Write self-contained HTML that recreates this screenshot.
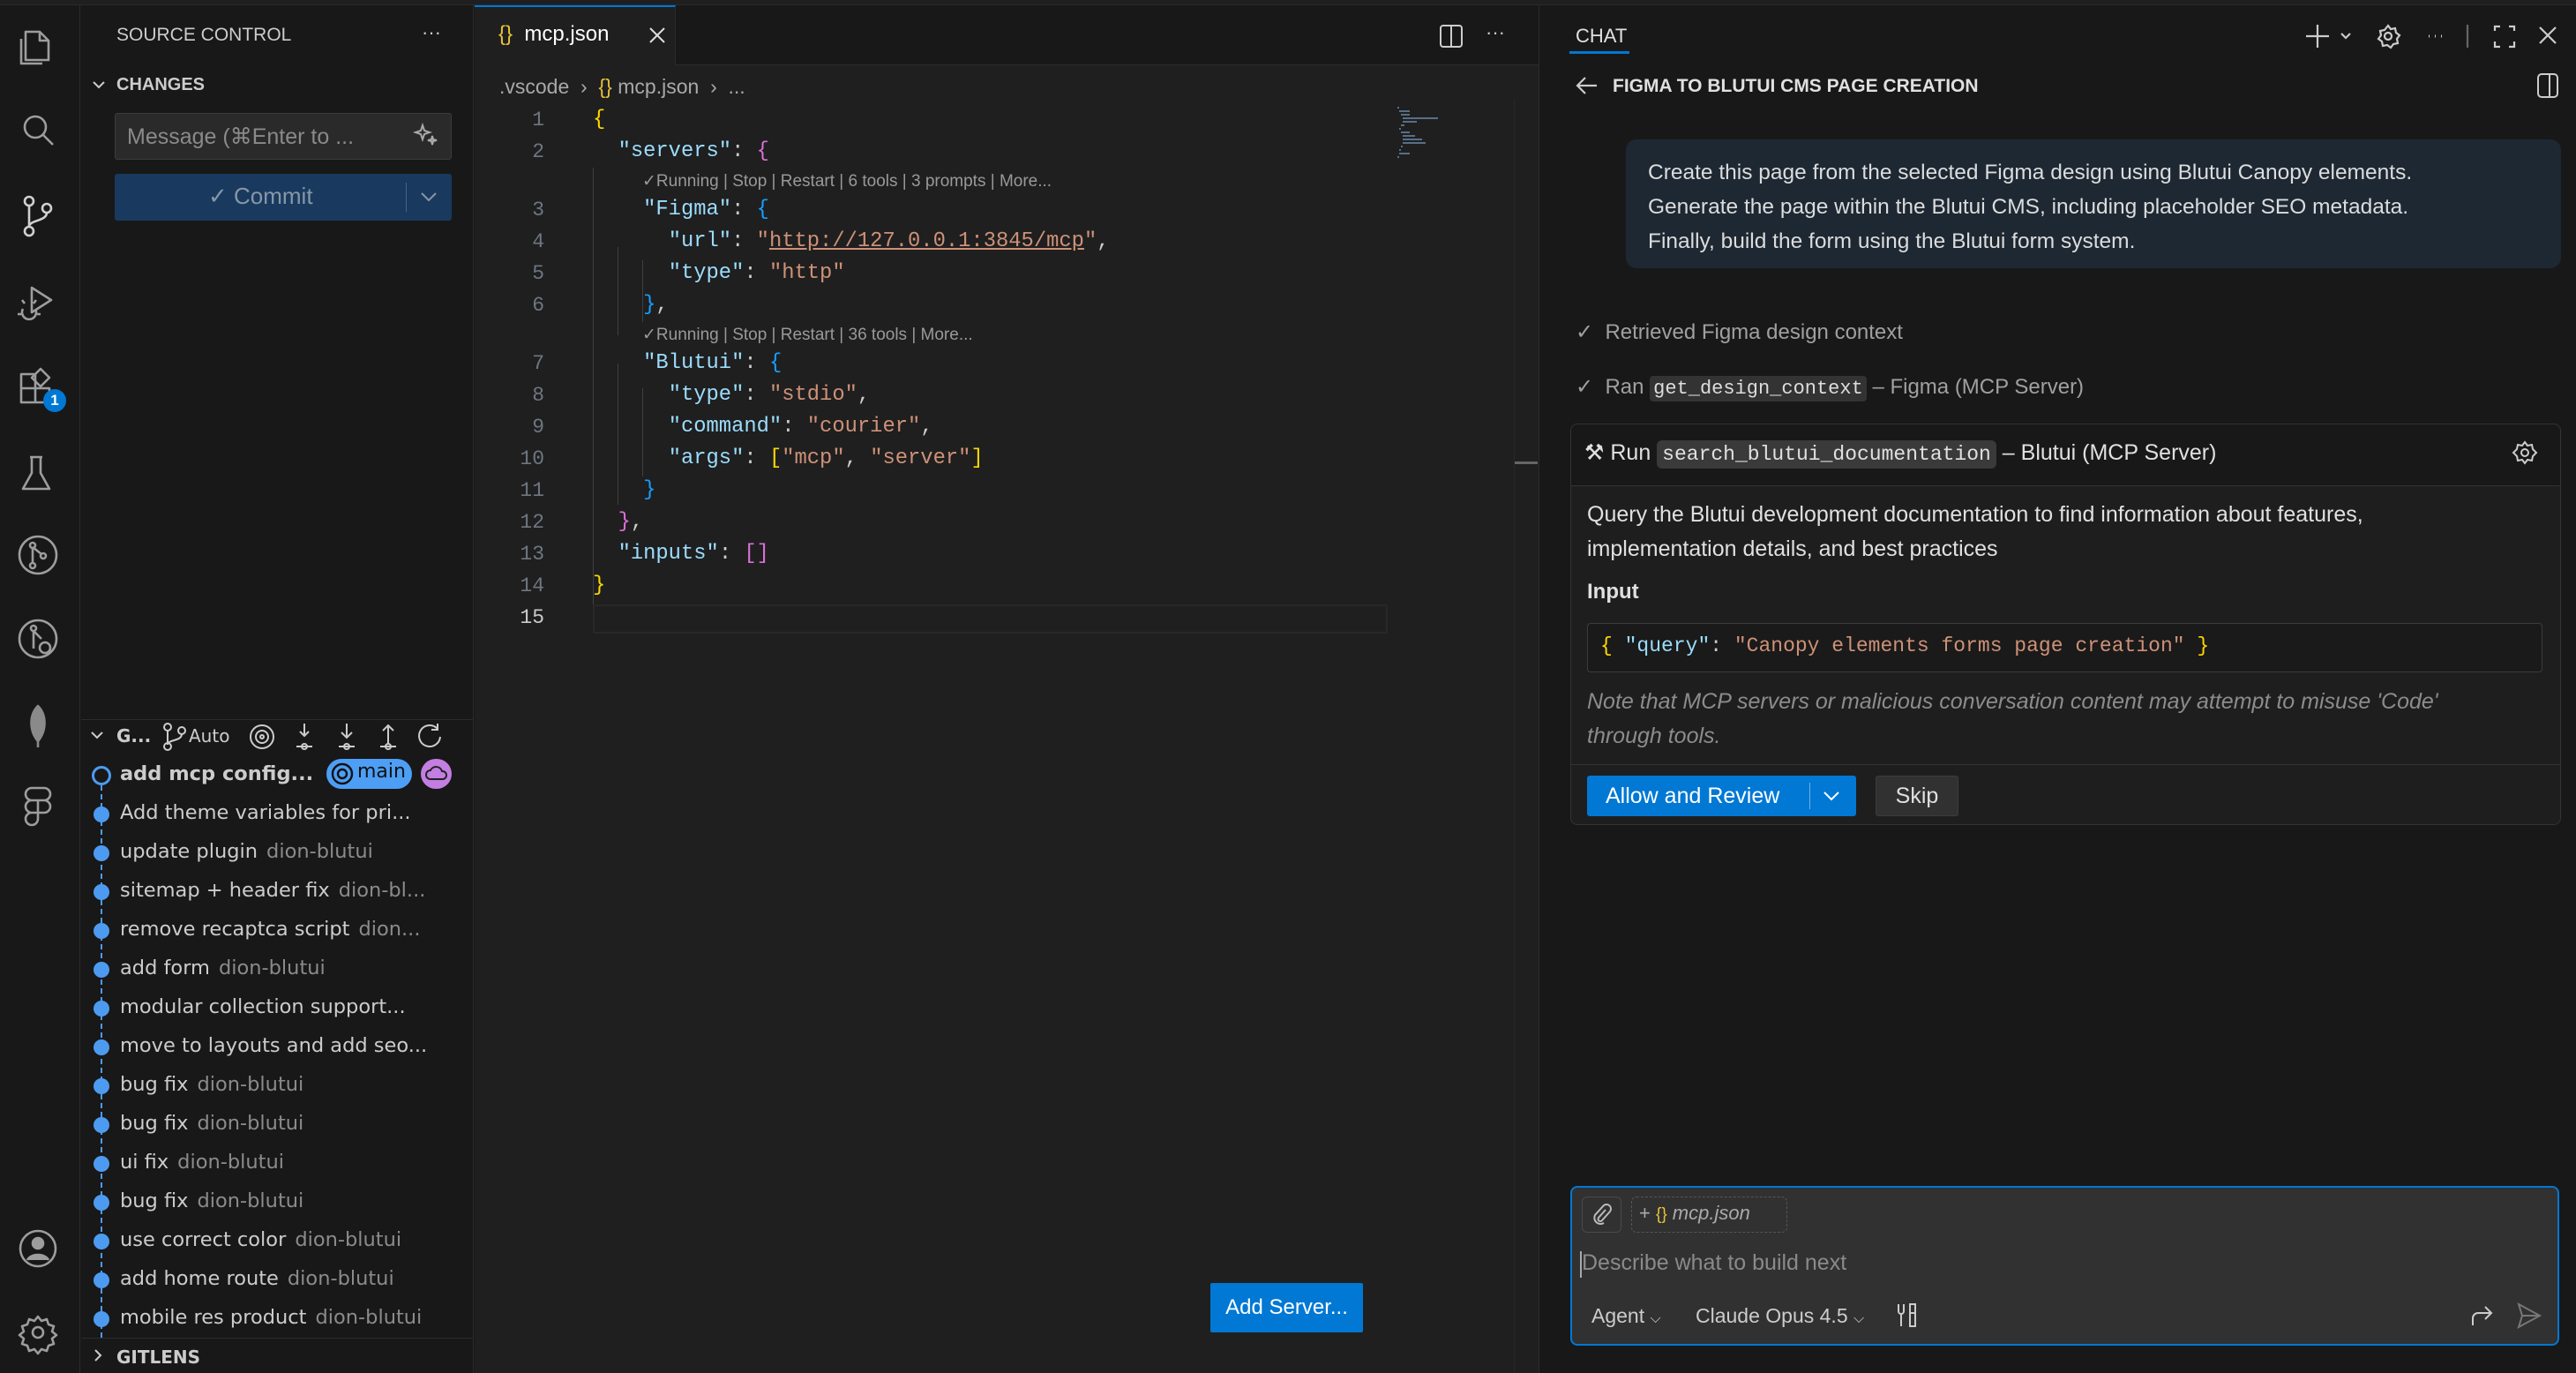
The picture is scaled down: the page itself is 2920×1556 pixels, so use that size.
<!DOCTYPE html>
<html><head><meta charset="utf-8">
<style>
*{margin:0;padding:0;box-sizing:border-box}
body{width:2920px;height:1556px;background:#181818;overflow:hidden;position:relative;font-family:"Liberation Sans",sans-serif;color:#cccccc}
.a{position:absolute;white-space:nowrap}
svg{position:absolute;overflow:visible}
.mono{font-family:"Liberation Mono",monospace}
.k{color:#9cdcfe}.s{color:#ce9178}.y{color:#ffd700}.p{color:#da70d6}.b{color:#179fff}
.ln{position:absolute;left:560px;width:57px;text-align:right;color:#6e7681;font-family:"Liberation Mono",monospace;font-size:23px}
.cl{position:absolute;left:672px;font-family:"Liberation Mono",monospace;font-size:23.8px;color:#cccccc;white-space:pre}
.lens{position:absolute;left:728px;font-size:19px;color:#999}
.cm{position:absolute;left:136px;font-family:"DejaVu Sans",sans-serif;font-size:22.5px;color:#cccccc;white-space:nowrap}
.cm i{font-style:normal;color:#8b8b8b;margin-left:10px}
.dot{position:absolute;left:106px;width:18px;height:18px;border-radius:50%;background:#4d9bf0}
</style></head><body>
<div class="a" style="left:0;top:0;width:2920px;height:6px;background:#1f1f1f;border-bottom:1px solid #2b2b2b"></div>
<div class="a" style="left:0;top:6px;width:91px;height:1550px;background:#181818;border-right:1px solid #2b2b2b"></div>
<svg width="91" height="1556" style="left:0;top:0" fill="none" stroke="#9d9d9d" stroke-width="2.6" stroke-linejoin="round">
 <path d="M29 36h16l10 10v22H29z M45 36v10h10 M24 44v28h24"/>
 <circle cx="40" cy="144" r="12"/><path d="M49 153l11 11"/>
 <g stroke="#d0d0d0"><circle cx="33" cy="228" r="5"/><circle cx="33" cy="262" r="5"/><circle cx="53" cy="236" r="5"/><path d="M33 233v24 M53 241c0 10-20 8-20 16"/></g>
 <path d="M36 326l22 14-22 14z M26 350a8 8 0 1 0 14 0 M24 356h-4 M42 356h4 M28 344l-3-4 M38 344l3-4"/>
 <path d="M24 424h16v16H24z M24 440h16v16H24z M40 440h16v16H40z M46 418l10 10-10 10-10-10z"/>
 <path d="M34 518h14 M36 518v18l-10 18h30l-10-18v-18"/>
 <circle cx="43" cy="629" r="21"/><circle cx="37" cy="618" r="3"/><circle cx="37" cy="641" r="3"/><circle cx="49" cy="630" r="3"/><path d="M37 621v17 M37 620l10 8"/>
 <circle cx="43" cy="724" r="21"/><circle cx="38" cy="712" r="3"/><path d="M38 715v20 M38 715l9 9"/><circle cx="51" cy="734" r="6"/>
 <path d="M43 800c-10 10-10 28 0 40 10-12 10-30 0-40z M43 815v32" fill="#8a8a8a" stroke="#8a8a8a"/>
 <path d="M36 893h14a7 7 0 0 1 0 14H36a7 7 0 0 1 0-14z M36 907h7v14h-7a7 7 0 0 1 0-14z M43 907h7a7 7 0 1 1 0 14h-7z M36 921h7v7a7 7 0 1 1-7-7z"/>
 <circle cx="43" cy="1415" r="20"/><circle cx="43" cy="1409" r="6" fill="#9d9d9d"/><path d="M31 1428c4-8 20-8 24 0" fill="#9d9d9d"/>
 <circle cx="43" cy="1510" r="6"/><path d="M43 1492l4 5 6-2 2 6 6 2-2 6 5 4-5 4 2 6-6 2-2 6-6-2-4 5-4-5-6 2-2-6-6-2 2-6-5-4 5-4-2-6 6-2 2-6 6 2z"/>
</svg>
<div class="a" style="left:49px;top:441px;width:26px;height:26px;border-radius:13px;background:#0078d4;color:#fff;font-size:17px;font-weight:bold;text-align:center;line-height:26px">1</div>

<div class="a" style="left:92px;top:6px;width:445px;height:1550px;background:#181818;border-right:1px solid #2b2b2b"></div>
<div class="a" style="left:132px;top:28px;font-size:21px;color:#cccccc">SOURCE CONTROL</div>
<div class="a" style="left:478px;top:24px;font-size:22px;color:#ccc">···</div>
<svg style="left:104px;top:90px" width="16" height="14" fill="none" stroke="#ccc" stroke-width="2"><path d="M2 3l6 6 6-6"/></svg>
<div class="a" style="left:132px;top:85px;font-size:20px;font-weight:bold;color:#cccccc">CHANGES</div>
<div class="a" style="left:130px;top:128px;width:382px;height:53px;background:#2a2a2a;border:1px solid #3c3c3c;border-radius:3px"></div>
<div class="a" style="left:144px;top:140px;font-size:25px;color:#8a8a8a">Message (⌘Enter to ...</div>
<svg style="left:470px;top:140px" width="28" height="28" fill="none" stroke="#aaa" stroke-width="2"><path d="M9 2l2 6 6 2-6 2-2 6-2-6-6-2 6-2z M20 14l1 4 4 1-4 1-1 4-1-4-4-1 4-1z"/></svg>
<div class="a" style="left:130px;top:197px;width:382px;height:53px;background:#193a5e;border-radius:3px"></div>
<div class="a" style="left:236px;top:207px;font-size:26px;color:#8796a8">✓ Commit</div>
<div class="a" style="left:460px;top:207px;width:1px;height:33px;background:#4b6480"></div>
<svg style="left:476px;top:216px" width="20" height="14" fill="none" stroke="#8796a8" stroke-width="2"><path d="M2 3l8 8 8-8"/></svg>

<div class="a" style="left:92px;top:815px;width:444px;height:1px;background:#2b2b2b"></div>
<svg style="left:102px;top:828px" width="16" height="12" fill="none" stroke="#ccc" stroke-width="2"><path d="M2 2l6 6 6-6"/></svg>
<div class="a" style="left:132px;top:822px;font-family:'DejaVu Sans',sans-serif;font-size:20px;font-weight:bold;color:#ccc">G...</div>
<svg style="left:184px;top:818px" width="400" height="36" fill="none" stroke="#ccc" stroke-width="2">
 <circle cx="6" cy="6" r="4"/><circle cx="6" cy="28" r="4"/><circle cx="22" cy="10" r="4"/><path d="M6 10v14 M22 14c0 8-16 6-16 12"/>
 <circle cx="113" cy="17" r="13"/><circle cx="113" cy="17" r="7"/><circle cx="113" cy="17" r="2"/>
 <path d="M161 2v14 M156 11l5 5 5-5 M152 28h18"/><circle cx="161" cy="28" r="3"/>
 <path d="M209 2v16 M203 12l6 6 6-6 M200 28h18"/><circle cx="209" cy="28" r="3"/>
 <path d="M256 25V4 M250 10l6-6 6 6 M247 28h18"/><circle cx="256" cy="28" r="3"/>
 <path d="M312 8a12 12 0 1 0 3 9 M312 2v7h-7"/>
</svg>
<div class="a" style="left:214px;top:822px;font-family:'DejaVu Sans',sans-serif;font-size:20px;color:#ccc">Auto</div>
<div class="a" style="left:114px;top:890px;width:0;height:626px;border-left:2px dashed #4d9bf0"></div>
<div class="a" style="left:104px;top:868px;width:22px;height:22px;border-radius:50%;border:3px solid #4d9bf0;background:#181818"></div>
<div class="cm" style="top:864px;font-weight:bold">add mcp config...</div>
<div class="a" style="left:370px;top:860px;width:97px;height:34px;border-radius:17px;background:#4d9ef5"></div>
<svg style="left:375px;top:864px" width="28" height="28" fill="none" stroke="#111" stroke-width="2.4"><circle cx="13" cy="13" r="11"/><circle cx="13" cy="13" r="5"/></svg>
<div class="a" style="left:405px;top:862px;font-family:'DejaVu Sans',sans-serif;font-size:22px;color:#111">main</div>
<div class="a" style="left:477px;top:860px;width:35px;height:34px;border-radius:17px;background:#c27ee0"></div>
<svg style="left:482px;top:868px" width="26" height="18" fill="none" stroke="#222" stroke-width="2"><path d="M6 15a5 5 0 0 1 0-10 7 7 0 0 1 13 1 4 4 0 0 1 1 9z"/></svg>
<div class="dot" style="top:914px"></div><div class="cm" style="top:908px">Add theme variables for pri...</div>
<div class="dot" style="top:958px"></div><div class="cm" style="top:952px">update plugin<i>dion-blutui</i></div>
<div class="dot" style="top:1002px"></div><div class="cm" style="top:996px">sitemap + header fix<i>dion-bl...</i></div>
<div class="dot" style="top:1046px"></div><div class="cm" style="top:1040px">remove recaptca script<i>dion...</i></div>
<div class="dot" style="top:1090px"></div><div class="cm" style="top:1084px">add form<i>dion-blutui</i></div>
<div class="dot" style="top:1134px"></div><div class="cm" style="top:1128px">modular collection support...</div>
<div class="dot" style="top:1178px"></div><div class="cm" style="top:1172px">move to layouts and add seo...</div>
<div class="dot" style="top:1222px"></div><div class="cm" style="top:1216px">bug fix<i>dion-blutui</i></div>
<div class="dot" style="top:1266px"></div><div class="cm" style="top:1260px">bug fix<i>dion-blutui</i></div>
<div class="dot" style="top:1310px"></div><div class="cm" style="top:1304px">ui fix<i>dion-blutui</i></div>
<div class="dot" style="top:1354px"></div><div class="cm" style="top:1348px">bug fix<i>dion-blutui</i></div>
<div class="dot" style="top:1398px"></div><div class="cm" style="top:1392px">use correct color<i>dion-blutui</i></div>
<div class="dot" style="top:1442px"></div><div class="cm" style="top:1436px">add home route<i>dion-blutui</i></div>
<div class="dot" style="top:1486px"></div><div class="cm" style="top:1480px">mobile res product<i>dion-blutui</i></div>
<div class="a" style="left:92px;top:1516px;width:444px;height:40px;background:#181818;border-top:1px solid #2b2b2b"></div>
<svg style="left:106px;top:1528px" width="12" height="16" fill="none" stroke="#ccc" stroke-width="2"><path d="M2 2l6 6-6 6"/></svg>
<div class="a" style="left:132px;top:1526px;font-family:'DejaVu Sans',sans-serif;font-size:20px;font-weight:bold;color:#ccc">GITLENS</div>

<div class="a" style="left:538px;top:6px;width:1206px;height:1550px;background:#1f1f1f"></div>
<div class="a" style="left:538px;top:6px;width:1206px;height:68px;background:#181818;border-bottom:1px solid #2b2b2b"></div>
<div class="a" style="left:538px;top:6px;width:228px;height:69px;background:#1f1f1f;border-top:2px solid #0078d4;border-right:1px solid #2b2b2b"></div>
<div class="a" style="left:565px;top:25px;font-size:24px"><span style="color:#e8c23a">{}</span>&nbsp; <span style="color:#fff">mcp.json</span></div>
<svg style="left:736px;top:31px" width="18" height="18" stroke="#ddd" stroke-width="2"><path d="M1 1l16 16M17 1L1 17"/></svg>
<svg style="left:1632px;top:28px" width="26" height="26" fill="none" stroke="#ccc" stroke-width="2"><rect x="1" y="1" width="24" height="24" rx="3"/><path d="M13 1v24"/></svg>
<div class="a" style="left:1684px;top:24px;font-size:22px;color:#ccc">···</div>
<div class="a" style="left:566px;top:85px;font-size:23px;color:#a9a9a9">.vscode &nbsp;›&nbsp; <span style="color:#e8c23a">{}</span> mcp.json &nbsp;›&nbsp; ...</div>
<div class="a" style="left:672px;top:190px;width:1px;height:495px;background:#404040"></div>
<div class="a" style="left:700px;top:280px;width:1px;height:100px;background:#404040"></div>
<div class="a" style="left:728px;top:295px;width:1px;height:70px;background:#404040"></div>
<div class="a" style="left:700px;top:412px;width:1px;height:160px;background:#404040"></div>
<div class="a" style="left:728px;top:440px;width:1px;height:100px;background:#404040"></div>
<div class="a" style="left:672px;top:685px;width:901px;height:33px;border:2px solid #282828"></div>
<div class="ln" style="top:123px">1</div><div class="cl" style="top:122px"><span class="y">{</span></div>
<div class="ln" style="top:159px">2</div><div class="cl" style="top:158px">  <span class="k">"servers"</span>: <span class="p">{</span></div>
<div class="lens" style="top:194px">✓Running | Stop | Restart | 6 tools | 3 prompts | More...</div>
<div class="ln" style="top:225px">3</div><div class="cl" style="top:224px">    <span class="k">"Figma"</span>: <span class="b">{</span></div>
<div class="ln" style="top:261px">4</div><div class="cl" style="top:260px">      <span class="k">"url"</span>: <span class="s">"<u>http://127.0.0.1:3845/mcp</u>"</span>,</div>
<div class="ln" style="top:297px">5</div><div class="cl" style="top:296px">      <span class="k">"type"</span>: <span class="s">"http"</span></div>
<div class="ln" style="top:333px">6</div><div class="cl" style="top:332px">    <span class="b">}</span>,</div>
<div class="lens" style="top:368px">✓Running | Stop | Restart | 36 tools | More...</div>
<div class="ln" style="top:399px">7</div><div class="cl" style="top:398px">    <span class="k">"Blutui"</span>: <span class="b">{</span></div>
<div class="ln" style="top:435px">8</div><div class="cl" style="top:434px">      <span class="k">"type"</span>: <span class="s">"stdio"</span>,</div>
<div class="ln" style="top:471px">9</div><div class="cl" style="top:470px">      <span class="k">"command"</span>: <span class="s">"courier"</span>,</div>
<div class="ln" style="top:507px">10</div><div class="cl" style="top:506px">      <span class="k">"args"</span>: <span class="y">[</span><span class="s">"mcp"</span>, <span class="s">"server"</span><span class="y">]</span></div>
<div class="ln" style="top:543px">11</div><div class="cl" style="top:542px">    <span class="b">}</span></div>
<div class="ln" style="top:579px">12</div><div class="cl" style="top:578px">  <span class="p">}</span>,</div>
<div class="ln" style="top:615px">13</div><div class="cl" style="top:614px">  <span class="k">"inputs"</span>: <span class="p">[]</span></div>
<div class="ln" style="top:651px">14</div><div class="cl" style="top:650px"><span class="y">}</span></div>
<div class="ln" style="top:687px;color:#ccc">15</div>
<svg style="left:1582px;top:120px" width="80" height="60" stroke="#6a8aa8" stroke-width="1.5"><path d="M2 2h2 M4 6h12 M6 10h10 M8 14h40 M8 18h16 M6 22h4 M4 26h2 M6 30h10 M8 34h14 M8 38h22 M8 42h26 M6 46h2 M4 50h2 M4 54h12 M2 58h2"/></svg>
<div class="a" style="left:1717px;top:523px;width:26px;height:3px;background:#666"></div>
<div class="a" style="left:1716px;top:112px;width:1px;height:1444px;background:#262626"></div>
<div class="a" style="left:1372px;top:1454px;width:173px;height:56px;background:#0078d4;border-radius:2px;color:#fff;font-size:24px;text-align:center;line-height:56px">Add Server...</div>

<div class="a" style="left:1744px;top:6px;width:1176px;height:1550px;background:#181818;border-left:1px solid #2b2b2b"></div>
<div class="a" style="left:1786px;top:28px;font-size:22px;color:#e0e0e0">CHAT</div>
<div class="a" style="left:1779px;top:58px;width:68px;height:3px;background:#0078d4"></div>
<svg style="left:2610px;top:26px" width="300" height="30" fill="none" stroke="#ccc" stroke-width="2.2">
 <path d="M17 2v26 M4 15h26 M44 12l5 5 5-5"/>
 <circle cx="97" cy="15" r="4"/><path d="M97 3l3 4 5-1 1 5 4 3-3 4 1 5-5 1-3 4-4-3-5 1-1-5-4-3 3-4-1-5 5-1z"/>
 <path d="M143 15h1 M150 15h1 M157 15h1" stroke-width="3"/>
 <path d="M187 2v26" stroke="#666"/>
 <path d="M218 9V4h6 M234 4h6v5 M240 21v6h-6 M224 27h-6v-6"/>
 <path d="M269 5l18 18 M287 5l-18 18"/>
</svg>
<svg style="left:1786px;top:86px" width="26" height="22" fill="none" stroke="#ccc" stroke-width="2.2"><path d="M24 11H3 M11 2l-9 9 9 9"/></svg>
<div class="a" style="left:1828px;top:86px;font-size:21px;font-weight:bold;color:#e0e0e0">FIGMA TO BLUTUI CMS PAGE CREATION</div>
<svg style="left:2876px;top:83px" width="26" height="28" fill="none" stroke="#ccc" stroke-width="2"><rect x="1" y="1" width="22" height="26" rx="4"/><path d="M14 1v26"/></svg>
<div class="a" style="left:1843px;top:158px;width:1060px;height:146px;background:#1d2833;border-radius:12px"></div>
<div class="a" style="left:1868px;top:176px;font-size:24.5px;line-height:39px;color:#dcdcdc">Create this page from the selected Figma design using Blutui Canopy elements.<br>Generate the page within the Blutui CMS, including placeholder SEO metadata.<br>Finally, build the form using the Blutui form system.</div>
<div class="a" style="left:1786px;top:362px;font-size:24px;color:#a0a0a0">✓&nbsp; Retrieved Figma design context</div>
<div class="a" style="left:1786px;top:424px;font-size:24px;color:#a0a0a0">✓&nbsp; Ran <span class="mono" style="background:#333;color:#ddd;border-radius:4px;padding:2px 4px;font-size:22px">get_design_context</span> – Figma (MCP Server)</div>
<div class="a" style="left:1780px;top:480px;width:1123px;height:455px;border:1px solid #333;border-radius:8px;background:#1e1e1e"></div>
<div class="a" style="left:1781px;top:481px;width:1121px;height:70px;background:#181818;border-bottom:1px solid #333;border-radius:8px 8px 0 0"></div>
<div class="a" style="left:1796px;top:498px;font-size:25px;color:#e0e0e0">⚒ Run <span class="mono" style="background:#3a3a3a;border-radius:6px;padding:3px 6px;font-size:23px">search_blutui_documentation</span> – Blutui (MCP Server)</div>
<svg style="left:2848px;top:499px" width="28" height="28" fill="none" stroke="#ccc" stroke-width="2"><circle cx="14" cy="14" r="4"/><path d="M14 2l3 4 5-1 1 5 4 4-4 4-1 5-5-1-3 4-3-4-5 1-1-5-4-4 4-4 1-5 5 1z"/></svg>
<div class="a" style="left:1799px;top:564px;font-size:25px;line-height:39px;color:#e0e0e0">Query the Blutui development documentation to find information about features,<br>implementation details, and best practices</div>
<div class="a" style="left:1799px;top:657px;font-size:24px;font-weight:bold;color:#e0e0e0">Input</div>
<div class="a" style="left:1799px;top:706px;width:1083px;height:56px;border:1px solid #3c3c3c;border-radius:4px;background:#1a1a1a"></div>
<div class="a mono" style="left:1814px;top:719px;font-size:23px"><span class="y">{</span> <span class="k">"query"</span>: <span class="s">"Canopy elements forms page creation"</span> <span class="y">}</span></div>
<div class="a" style="left:1799px;top:776px;font-size:25px;line-height:39px;font-style:italic;color:#8c8c8c">Note that MCP servers or malicious conversation content may attempt to misuse 'Code'<br>through tools.</div>
<div class="a" style="left:1781px;top:866px;width:1121px;height:1px;background:#333"></div>
<div class="a" style="left:1799px;top:879px;width:305px;height:46px;background:#0078d4;border-radius:3px"></div>
<div class="a" style="left:1820px;top:888px;font-size:25px;color:#fff">Allow and Review</div>
<div class="a" style="left:2051px;top:887px;width:1px;height:30px;background:#6fb0e8"></div>
<svg style="left:2066px;top:895px" width="20" height="14" fill="none" stroke="#fff" stroke-width="2"><path d="M2 3l8 8 8-8"/></svg>
<div class="a" style="left:2126px;top:879px;width:94px;height:46px;background:#313131;border:1px solid #3c3c3c;border-radius:3px;color:#e0e0e0;font-size:25px;text-align:center;line-height:44px">Skip</div>

<div class="a" style="left:1780px;top:1344px;width:1121px;height:181px;background:#313131;border:2px solid #0078d4;border-radius:8px"></div>
<div class="a" style="left:1793px;top:1356px;width:45px;height:41px;border:1px solid #4a4a4a;border-radius:6px"></div>
<svg style="left:1805px;top:1365px" width="22" height="24" fill="none" stroke="#bbb" stroke-width="2"><path d="M15 6l-8 9a2.5 2.5 0 0 0 4 3l9-10a5 5 0 0 0-7-7L3 12a7 7 0 0 0 10 9"/></svg>
<div class="a" style="left:1849px;top:1356px;width:177px;height:41px;border:1px dashed #555;border-radius:6px"></div>
<div class="a" style="left:1858px;top:1362px;font-size:22px;color:#aaa">+ <span style="color:#e8c23a;font-size:19px">{}</span> <i>mcp.json</i></div>
<div class="a" style="left:1791px;top:1418px;width:2px;height:30px;background:#aaa"></div>
<div class="a" style="left:1793px;top:1417px;font-size:25px;color:#8a8a8a">Describe what to build next</div>
<div class="a" style="left:1804px;top:1478px;font-size:23px;color:#ccc">Agent <span style="font-size:16px">⌵</span></div>
<div class="a" style="left:1922px;top:1478px;font-size:23px;color:#ccc">Claude Opus 4.5 <span style="font-size:16px">⌵</span></div>
<svg style="left:2148px;top:1476px" width="26" height="30" fill="none" stroke="#ccc" stroke-width="2"><path d="M4 2v8a3 3 0 0 0 6 0V2 M7 13v14 M17 2h6v25h-6z M17 12h6"/></svg>
<svg style="left:2800px;top:1478px" width="28" height="26" fill="none" stroke="#ccc" stroke-width="2"><path d="M3 24v-8a6 6 0 0 1 6-6h15 M17 3l7 7-7 7"/></svg>
<svg style="left:2852px;top:1476px" width="30" height="30" fill="none" stroke="#777" stroke-width="2"><path d="M3 2l24 13L3 28l4-13z M7 15h20"/></svg>
</body></html>
